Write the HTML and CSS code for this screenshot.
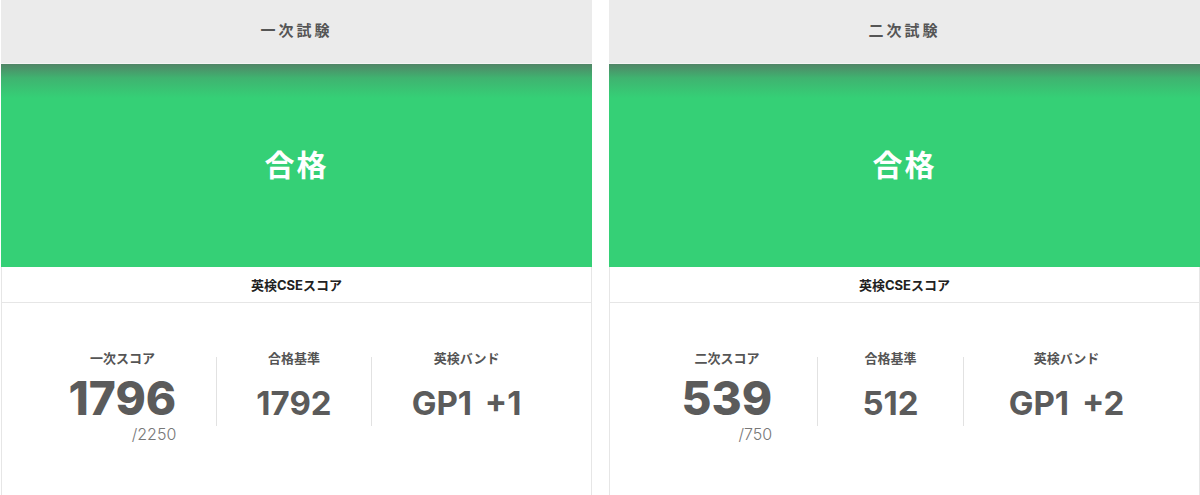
FILE: index.html
```html
<!DOCTYPE html>
<html lang="ja">
<head>
    <meta charset="UTF-8">
    <title>英検 結果</title>
    <link rel="stylesheet" href="styles.css">
</head>
<body>
    <div class="results">
        <!-- 一次試験 -->
        <div class="card">
            <div class="card-head">一次試験</div>
            <div class="verdict">合格</div>
            <div class="score-title">英検CSEスコア</div>
            <div class="stats">
                <div class="stat">
                    <div class="stat-label">一次スコア</div>
                    <div class="stat-main">
                        <div class="stat-value big">1796</div>
                        <div class="stat-total">/2250</div>
                    </div>
                </div>
                <div class="stat sep">
                    <div class="stat-label">合格基準</div>
                    <div class="stat-main">
                        <div class="stat-value">1792</div>
                    </div>
                </div>
                <div class="stat sep">
                    <div class="stat-label">英検バンド</div>
                    <div class="stat-main">
                        <div class="stat-value">GP1 +1</div>
                    </div>
                </div>
            </div>
        </div>

        <!-- 二次試験 -->
        <div class="card">
            <div class="card-head">二次試験</div>
            <div class="verdict">合格</div>
            <div class="score-title">英検CSEスコア</div>
            <div class="stats">
                <div class="stat">
                    <div class="stat-label">二次スコア</div>
                    <div class="stat-main">
                        <div class="stat-value big">539</div>
                        <div class="stat-total">/750</div>
                    </div>
                </div>
                <div class="stat sep">
                    <div class="stat-label">合格基準</div>
                    <div class="stat-main">
                        <div class="stat-value">512</div>
                    </div>
                </div>
                <div class="stat sep">
                    <div class="stat-label">英検バンド</div>
                    <div class="stat-main">
                        <div class="stat-value">GP1 +2</div>
                    </div>
                </div>
            </div>
        </div>
    </div>
</body>
</html>
```

FILE: styles.css
```css
body {
    margin: 0;
    background: #fff;
    font-family: Inter, "Noto Sans CJK JP", sans-serif;
    overflow: hidden;
}
.results {
    display: flex;
    gap: 17px;
    padding-left: 1px;
}
.card {
    flex: 0 0 591px;
}
/* bandeau gris du haut */
.card-head {
    height: 64px;
    border-bottom: 1px solid #f4f4f4;
    background: #ebebeb;
    color: #555;
    font-size: 15px;
    font-weight: 700;
    letter-spacing: 3px;
    display: flex;
    align-items: center;
    justify-content: center;
    padding-bottom: 4px;
    box-sizing: border-box;
}
/* bloc vert avec ombre en haut */
.verdict {
    height: 203px;
    background: linear-gradient(to bottom, rgba(94,94,94,0.66), rgba(94,94,94,0.25) 14px, rgba(94,94,94,0) 34px), #35d076;
    color: #fff;
    font-size: 30px;
    font-weight: 700;
    letter-spacing: 2px;
    display: flex;
    align-items: center;
    justify-content: center;
    padding-bottom: 6px;
    box-sizing: border-box;
}
.score-title {
    height: 36px;
    border: 1px solid #e6e6e6;
    border-top: none;
    color: #222;
    font-size: 13px;
    font-weight: 700;
    display: flex;
    align-items: center;
    justify-content: center;
    box-sizing: border-box;
}
.stats {
    display: flex;
    align-items: flex-start;
    padding: 54px 30px 60px 27px;
    border: 1px solid #e6e6e6;
    border-top: none;
}
.stat {
    flex: 1 1 auto;
    display: flex;
    flex-direction: column;
    align-items: center;
    padding-bottom: 11px;
}
.stat.sep {
    border-left: 1px solid #e2e2e2;
}
.stat-label {
    margin-top: -5px;
    font-size: 13px;
    line-height: 13px;
    font-weight: 700;
    color: #555;
}
.stat-main {
    display: flex;
    flex-direction: column;
    align-items: flex-end;
}
.stat-value {
    height: 50px;
    display: flex;
    align-items: flex-end;
    font-size: 33px;
    line-height: 0.727;
    font-weight: 700;
    color: #5b5b5b;
    word-spacing: 5px;
}
.stat-value.big {
    font-size: 46px;
    font-weight: 800;
}
.stat-total {
    margin-top: 11px;
    font-size: 16px;
    line-height: 16px;
    font-weight: 300;
    color: #777;
}
```
